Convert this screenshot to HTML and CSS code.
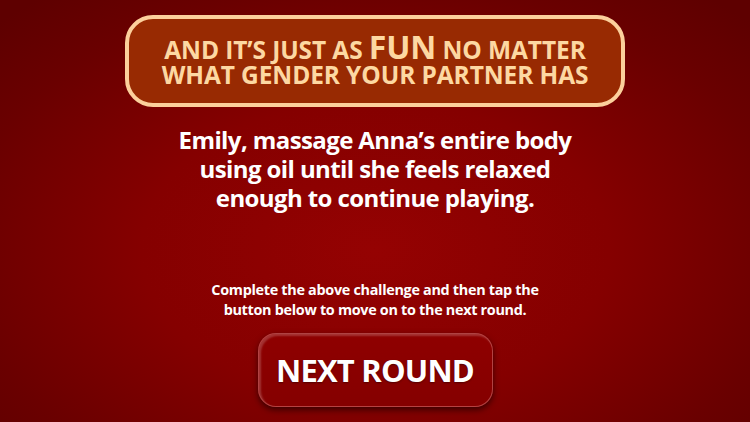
FILE: index.html
```html
<!DOCTYPE html>
<html>
<head>
<meta charset="utf-8">
<link rel="stylesheet" href="styles.css">
</head>
<body>
<div class="screen">
  <div class="banner">
    <div class="banner-line">AND IT’S JUST AS <span class="fun">FUN</span> NO MATTER</div>
    <div class="banner-line">WHAT GENDER YOUR PARTNER HAS</div>
  </div>
  <div class="challenge">
    Emily, massage Anna’s entire body<br>
    using oil until she feels relaxed<br>
    enough to continue playing.
  </div>
  <div class="hint">
    Complete the above challenge and then tap the<br>
    button below to move on to the next round.
  </div>
  <div class="button">NEXT ROUND</div>
</div>
</body>
</html>
```
FILE: styles.css
```css
html, body {
  margin: 0;
  padding: 0;
}
body {
  width: 750px;
  height: 422px;
  overflow: hidden;
  font-family: "Open Sans", "Liberation Sans", sans-serif;
  font-weight: 700;
}
.screen {
  width: 750px;
  height: 422px;
  box-sizing: border-box;
  padding-top: 15px;
  display: flex;
  flex-direction: column;
  align-items: center;
  background: radial-gradient(ellipse 520px 330px at 375px 250px, #950202 0%, #850000 45%, #6a0000 80%, #5e0000 100%);
}
.banner {
  width: 500px;
  height: 92px;
  box-sizing: border-box;
  border: 4px solid #fcd09c;
  border-radius: 28px;
  background: #982a02;
  color: #fdd8a2;
  display: flex;
  flex-direction: column;
  align-items: center;
  justify-content: center;
  font-size: 24.5px;
  line-height: 26px;
  letter-spacing: -0.1px;
  padding-top: 1px;
}
.banner-line {
  white-space: nowrap;
  height: 26px;
}
.fun {
  font-size: 32px;
  line-height: 22px;
}
.challenge {
  margin-top: 18px;
  color: #ffffff;
  font-size: 24px;
  line-height: 29px;
  text-align: center;
  letter-spacing: -0.6px;
}
.hint {
  margin-top: 68px;
  color: #ffffff;
  font-size: 14.4px;
  line-height: 20px;
  text-align: center;
  letter-spacing: -0.3px;
}
.button {
  margin-top: 13px;
  width: 235px;
  height: 74px;
  box-sizing: border-box;
  border-radius: 18px;
  background: linear-gradient(180deg, #8f0000 0%, #850000 100%);
  border: 1px solid rgba(255, 190, 190, 0.35);
  box-shadow: 0 3px 6px rgba(0, 0, 0, 0.55), inset 2px 2px 2px rgba(255, 255, 255, 0.2);
  color: #ffffff;
  font-size: 31px;
  letter-spacing: -0.8px;
  display: flex;
  align-items: center;
  justify-content: center;
  text-shadow: 0 1px 2px rgba(0, 0, 0, 0.4);
}
```
